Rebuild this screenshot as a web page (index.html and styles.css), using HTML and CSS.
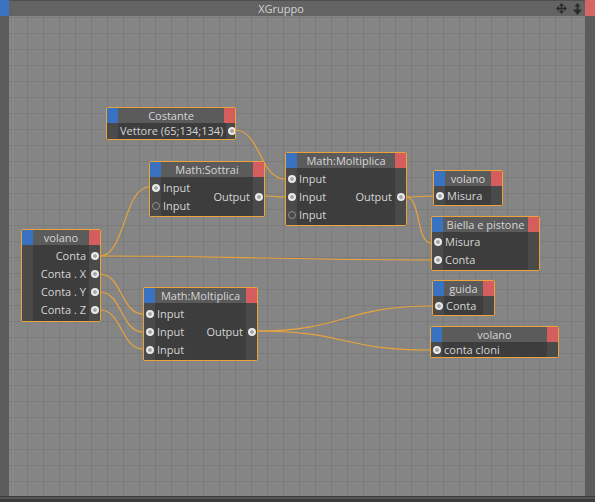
FILE: index.html
```html
<!DOCTYPE html>
<html lang="it">
<head>
    <meta charset="UTF-8">
    <title>XGruppo</title>
    <link rel="stylesheet" href="styles.css">
</head>
<body>
<div class="window">
    <div class="titlebar">
        <div class="tb-blue"></div>
        <div class="tb-title">XGruppo</div>
        <div class="tb-icons">
            <svg width="11" height="11" viewBox="0 0 11 11">
                <path d="M5.5 0 L8 3 H3 Z M5.5 11 L3 8 H8 Z M0 5.5 L3 3 V8 Z M11 5.5 L8 8 V3 Z" fill="#2a2a2a"/>
                <rect x="4.8" y="2" width="1.4" height="7" fill="#2a2a2a"/>
                <rect x="2" y="4.8" width="7" height="1.4" fill="#2a2a2a"/>
            </svg>
            <svg width="11" height="12" viewBox="0 0 11 12">
                <path d="M5.5 0 L8.5 3.5 H6.4 V6.5 H10 L5.5 12 L1 6.5 H4.6 V3.5 H2.5 Z" fill="#2a2a2a"/>
            </svg>
        </div>
        <div class="tb-red"></div>
    </div>

    <div class="workspace">
        <div class="side-l"></div>
        <div class="canvas">
            <!-- wires, in canvas coordinates -->
            <svg class="wires" width="576" height="480">
                <path d="M226 114 C251 114 251 163 276 163"/>
                <path d="M255 180 C265 180 266 181 276 181"/>
                <path d="M91 240 C116 240 115 171 140 171"/>
                <path d="M91 240 C256 240 257 244 422 244"/>
                <path d="M397 181 C410 181 411 180 424 180"/>
                <path d="M397 181 C412 181 407 227 422 227"/>
                <path d="M91 258 C113 258 112 298 134 298"/>
                <path d="M91 276 C113 276 112 316 134 316"/>
                <path d="M91 294 C113 294 112 333 134 333"/>
                <path d="M248 315 C336 315 335 290 423 290"/>
                <path d="M248 315 C335 315 334 334 421 334"/>
            </svg>

            <div class="node n-costante">
                <div class="head"><span class="cap-in"></span><span class="title">Costante</span><span class="cap-out"></span></div>
                <div class="body">
                    <div class="pins"></div>
                    <div class="ins"></div>
                    <div class="outs"><div class="row">Vettore (65;134;134)</div></div>
                    <div class="pins"><div class="slot"><i class="port"></i></div></div>
                </div>
            </div>

            <div class="node n-sottrai">
                <div class="head"><span class="cap-in"></span><span class="title">Math:Sottrai</span><span class="cap-out"></span></div>
                <div class="body">
                    <div class="pins">
                        <div class="slot"><i class="port"></i></div>
                        <div class="slot"><i class="port open"></i></div>
                    </div>
                    <div class="ins"><div class="row">Input</div><div class="row">Input</div></div>
                    <div class="outs"><div class="row">Output</div></div>
                    <div class="pins"><div class="slot"><i class="port"></i></div></div>
                </div>
            </div>

            <div class="node n-molt-top">
                <div class="head"><span class="cap-in"></span><span class="title">Math:Moltiplica</span><span class="cap-out"></span></div>
                <div class="body">
                    <div class="pins">
                        <div class="slot"><i class="port"></i></div>
                        <div class="slot"><i class="port"></i></div>
                        <div class="slot"><i class="port open"></i></div>
                    </div>
                    <div class="ins"><div class="row">Input</div><div class="row">Input</div><div class="row">Input</div></div>
                    <div class="outs"><div class="row">Output</div></div>
                    <div class="pins"><div class="slot"><i class="port"></i></div></div>
                </div>
            </div>

            <div class="node n-volano-tr">
                <div class="head"><span class="cap-in"></span><span class="title">volano</span><span class="cap-out"></span></div>
                <div class="body">
                    <div class="pins"><div class="slot"><i class="port"></i></div></div>
                    <div class="ins"><div class="row">Misura</div></div>
                    <div class="outs"></div>
                    <div class="pins"></div>
                </div>
            </div>

            <div class="node n-biella">
                <div class="head"><span class="cap-in"></span><span class="title">Biella e pistone</span><span class="cap-out"></span></div>
                <div class="body">
                    <div class="pins">
                        <div class="slot"><i class="port"></i></div>
                        <div class="slot"><i class="port"></i></div>
                    </div>
                    <div class="ins"><div class="row">Misura</div><div class="row">Conta</div></div>
                    <div class="outs"></div>
                    <div class="pins"></div>
                </div>
            </div>

            <div class="node n-volano-l">
                <div class="head"><span class="cap-in"></span><span class="title">volano</span><span class="cap-out"></span></div>
                <div class="body">
                    <div class="pins"></div>
                    <div class="ins"></div>
                    <div class="outs">
                        <div class="row">Conta</div>
                        <div class="row">Conta . X</div>
                        <div class="row">Conta . Y</div>
                        <div class="row">Conta . Z</div>
                    </div>
                    <div class="pins">
                        <div class="slot"><i class="port"></i></div>
                        <div class="slot"><i class="port"></i></div>
                        <div class="slot"><i class="port"></i></div>
                        <div class="slot"><i class="port"></i></div>
                    </div>
                </div>
            </div>

            <div class="node n-molt-bot">
                <div class="head"><span class="cap-in"></span><span class="title">Math:Moltiplica</span><span class="cap-out"></span></div>
                <div class="body">
                    <div class="pins">
                        <div class="slot"><i class="port"></i></div>
                        <div class="slot"><i class="port"></i></div>
                        <div class="slot"><i class="port"></i></div>
                    </div>
                    <div class="ins"><div class="row">Input</div><div class="row">Input</div><div class="row">Input</div></div>
                    <div class="outs"><div class="row">Output</div></div>
                    <div class="pins"><div class="slot"><i class="port"></i></div></div>
                </div>
            </div>

            <div class="node n-guida">
                <div class="head"><span class="cap-in"></span><span class="title">guida</span><span class="cap-out"></span></div>
                <div class="body">
                    <div class="pins"><div class="slot"><i class="port"></i></div></div>
                    <div class="ins"><div class="row">Conta</div></div>
                    <div class="outs"></div>
                    <div class="pins"></div>
                </div>
            </div>

            <div class="node n-volano-br">
                <div class="head"><span class="cap-in"></span><span class="title">volano</span><span class="cap-out"></span></div>
                <div class="body">
                    <div class="pins"><div class="slot"><i class="port"></i></div></div>
                    <div class="ins"><div class="row">conta cloni</div></div>
                    <div class="outs"></div>
                    <div class="pins"></div>
                </div>
            </div>
        </div>
        <div class="side-r"></div>
    </div>
    <div class="footer"></div>
</div>
</body>
</html>
```

FILE: styles.css
```css
body {
    margin: 0;
    background-color: #5c5c5c;
    font-family: 'Open Sans', 'Noto Sans', sans-serif;
}
.window {
    width: 595px;
    height: 502px;
    display: flex;
    flex-direction: column;
    background-color: #5c5c5c;
}
.titlebar {
    height: 16px;
    display: flex;
    background-color: #636363;
}
.tb-blue {
    width: 9px;
    background-color: #3b73c1;
}
.tb-red {
    width: 10px;
    background-color: #d66565;
}
.tb-title {
    flex: 1;
    text-align: center;
    color: #d4d4d4;
    font-size: 11px;
    line-height: 15px;
    border-top: 1px solid #4f4f4f;
}
.tb-icons {
    width: 32px;
    box-sizing: border-box;
    display: flex;
    align-items: center;
    gap: 5px;
    padding-left: 3px;
    border-top: 1px solid #4f4f4f;
}
.workspace {
    flex: 1;
    display: flex;
}
.side-l {
    width: 9px;
}
.side-r {
    width: 10px;
}
.canvas {
    flex: 1;
    position: relative;
    overflow: hidden;
    background-color: #858585;
    background-image:
        linear-gradient(to right, #7b7b7b 1px, transparent 1px),
        linear-gradient(to bottom, #7b7b7b 1px, transparent 1px);
    background-size: 16px 16px;
    background-position: 2px 1px;
    box-shadow: inset 5px 0 0 rgba(255, 255, 255, 0.04);
}
.footer {
    height: 6px;
    background: linear-gradient(#3b3b3b 0 1px, #555 1px 3px, #3d3d3d 3px);
}

/* wires */
.wires {
    position: absolute;
    left: 0;
    top: 0;
}
.wires path {
    fill: none;
    stroke: #e8a33a;
    stroke-width: 1.2;
}

/* nodes */
.node {
    position: absolute;
    box-sizing: border-box;
    display: flex;
    flex-direction: column;
    border: 1px solid #eba43a;
    border-radius: 2px;
    background-color: #3d3d3d;
    color: #d6d6d6;
    font-size: 11px;
    overflow: hidden;
}
.head {
    height: 15px;
    flex-shrink: 0;
    display: flex;
    background-color: #5b5b5b;
}
.cap-in {
    width: 11px;
    background-color: #3a72c2;
}
.cap-out {
    width: 11px;
    background-color: #d65d5d;
}
.title {
    flex: 1;
    text-align: center;
    line-height: 15px;
    white-space: nowrap;
    overflow: hidden;
}
.body {
    flex: 1;
    display: flex;
    min-height: 0;
}
.pins {
    width: 11px;
    flex-shrink: 0;
    display: flex;
    flex-direction: column;
    justify-content: center;
    background-color: #4a4a4a;
}
.ins {
    flex: 1;
    display: flex;
    flex-direction: column;
    justify-content: center;
    padding-left: 2px;
}
.outs {
    display: flex;
    flex-direction: column;
    justify-content: center;
    text-align: right;
    padding-right: 3px;
}
.row {
    height: 18px;
    line-height: 18px;
    white-space: nowrap;
    flex-shrink: 0;
}
.slot {
    height: 18px;
    flex-shrink: 0;
    display: flex;
    align-items: center;
    justify-content: center;
}
.port {
    width: 8px;
    height: 8px;
    border-radius: 50%;
    background: radial-gradient(circle, #a4a4a4 0 25%, #e8e8e8 40% 68%, #9a9a9a 90%);
}
.port.open {
    box-sizing: border-box;
    border: 1px solid #8e8e8e;
    background: transparent;
}

.n-costante { left: 97px; top: 91px; width: 130px; height: 33px; }
.n-sottrai { left: 140px; top: 145px; width: 116px; height: 56px; }
.n-molt-top { left: 276px; top: 136px; width: 122px; height: 74px; }
.n-volano-tr { left: 424px; top: 154px; width: 70px; height: 36px; }
.n-biella { left: 422px; top: 200px; width: 109px; height: 55px; }
.n-volano-l { left: 12px; top: 213px; width: 80px; height: 93px; }
.n-molt-bot { left: 134px; top: 271px; width: 115px; height: 74px; }
.n-guida { left: 423px; top: 264px; width: 63px; height: 36px; }
.n-volano-br { left: 421px; top: 310px; width: 129px; height: 32px; }
```
